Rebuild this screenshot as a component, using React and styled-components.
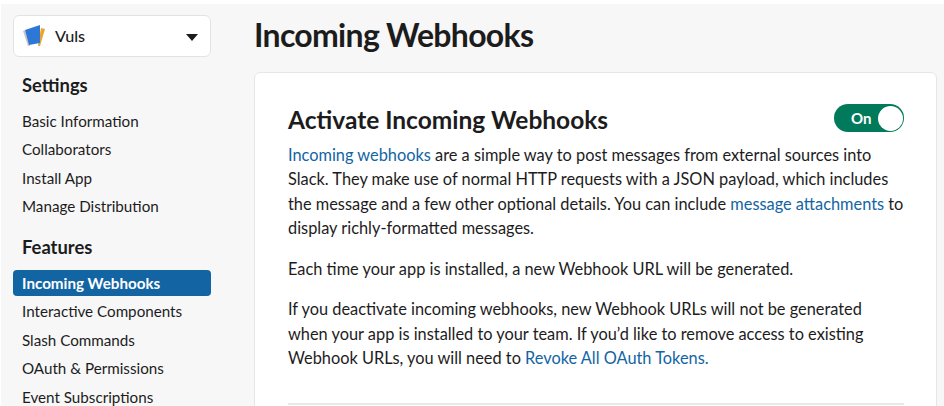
import React from 'react'
import styled, { createGlobalStyle } from "styled-components"

const GlobalStyle = createGlobalStyle`
  html, body {
    margin: 0;
    padding: 0;
    background: #fff;
  }
  body {
    font-family: Lato, "Liberation Sans", sans-serif;
    color: #1d1c1d;
  }
`;

const Page = styled.div`
  box-sizing: border-box;
  width: 944px;
  height: 406px;
  padding: 4px 0 0 1px;
  overflow: hidden;
`;

const Shell = styled.div`
  display: flex;
  height: 100%;
  background: #f7f7f7;
  overflow: hidden;
`;

const Sidebar = styled.nav`
  flex: none;
  width: 253px;
  box-sizing: border-box;
  padding: 11px 0 0 12px;
`;

const AppSelect = styled.div`
  box-sizing: border-box;
  display: flex;
  align-items: center;
  width: 198px;
  height: 42px;
  padding: 0 12px 0 8px;
  background: #fff;
  border: 1px solid #e3e3e3;
  border-radius: 6px;
  font-size: 16.2px;
  font-weight: 500;
`;

const AppName = styled.span`
  flex: 1;
  margin: -2px 0 0 9px;
`;

const Caret = styled.span`
  width: 0;
  height: 0;
  border-left: 6px solid transparent;
  border-right: 6px solid transparent;
  border-top: 7px solid #1d1c1d;
  margin-top: 2px;
`;

const GroupTitle = styled.h3`
  margin: ${(p) => p.$top}px 0 0 9px;
  font-size: 18.4px;
  line-height: 26px;
  font-weight: 700;
`;

const NavList = styled.div`
  display: flex;
  flex-direction: column;
  width: 198px;
  margin-top: ${(p) => p.$top}px;
`;

const NavItem = styled.div`
  box-sizing: border-box;
  height: ${(p) => (p.$active ? 26 : 28.5)}px;
  margin-bottom: ${(p) => (p.$active ? 1 : 0)}px;
  padding-left: 9px;
  border-radius: 4px;
  font-size: 15.2px;
  line-height: ${(p) => (p.$active ? 26 : 28.5)}px;
  font-weight: ${(p) => (p.$active ? 700 : 400)};
  color: ${(p) => (p.$active ? "#fff" : "#1d1c1d")};
  background: ${(p) => (p.$active ? "#1264a3" : "transparent")};
`;

const Main = styled.main`
  flex: 1;
  min-width: 0;
`;

const PageTitle = styled.h1`
  margin: 9px 0 0;
  font-size: 32px;
  line-height: 44px;
  font-weight: 700;
  letter-spacing: -0.7px;
`;

const Card = styled.section`
  box-sizing: border-box;
  width: 683px;
  height: 400px;
  margin-top: 15px;
  padding: 31px 32px 0 33px;
  background: #fff;
  border: 1px solid #e6e6e6;
  border-radius: 6px;
`;

const CardHeader = styled.div`
  display: flex;
  align-items: center;
  justify-content: space-between;
  height: 32px;
`;

const CardTitle = styled.h2`
  margin: 0;
  font-size: 24.5px;
  font-weight: 700;
  line-height: 32px;
`;

const Toggle = styled.div`
  box-sizing: border-box;
  display: flex;
  align-items: center;
  justify-content: space-between;
  width: 70px;
  height: 28px;
  margin-top: -4px;
  padding: 0 1px 0 17px;
  background: #007a5a;
  border-radius: 14px;
  color: #fff;
  font-size: 15px;
  font-weight: 700;
`;

const Knob = styled.span`
  width: 25px;
  height: 25px;
  border-radius: 50%;
  background: #fff;
`;

const Copy = styled.p`
  margin: ${(p) => p.$top}px 0 0;
  font-size: 16.35px;
  line-height: 24.5px;
  color: #1d1c1d;
`;

const Link = styled.a`
  color: #1264a3;
  text-decoration: none;
`;

const Rule = styled.hr`
  margin: 32px 0 0;
  border: 0;
  border-top: 2px solid #e8e8e8;
`;

function BookIcon() {
  return (
    <svg width="24" height="24" viewBox="0 0 24 24">
      <path d="M1 7 L6 22 L8 22 L3 6 Z" fill="#c4c8cc" />
      <path d="M19 4 L23 5 L18 22 L16 22 Z" fill="#eaa52b" />
      <path d="M3 6 L18 1 L18 19 L7 21 Z" fill="#2f77d6" />
    </svg>
  )
}

const settings = ["Basic Information", "Collaborators", "Install App", "Manage Distribution"]
const features = ["Incoming Webhooks", "Interactive Components", "Slash Commands", "OAuth & Permissions", "Event Subscriptions"]

function App() {
  return (
    <Page>
      <GlobalStyle />
      <Shell>
        <Sidebar>
          <AppSelect>
            <BookIcon />
            <AppName>Vuls</AppName>
            <Caret />
          </AppSelect>
          <GroupTitle $top={15}>Settings</GroupTitle>
          <NavList $top={8.5}>
            {settings.map((s) => <NavItem key={s}>{s}</NavItem>)}
          </NavList>
          <GroupTitle $top={13.5}>Features</GroupTitle>
          <NavList $top={10}>
            {features.map((s) => <NavItem key={s} $active={s === "Incoming Webhooks"}>{s}</NavItem>)}
          </NavList>
        </Sidebar>
        <Main>
          <PageTitle>Incoming Webhooks</PageTitle>
          <Card>
            <CardHeader>
              <CardTitle>Activate Incoming Webhooks</CardTitle>
              <Toggle>On<Knob /></Toggle>
            </CardHeader>
            <Copy $top={6.5}>
              <Link>Incoming webhooks</Link> are a simple way to post messages from external sources into Slack. They make use of normal HTTP requests with a JSON payload, which includes the message and a few other optional details. You can include <Link>message attachments</Link> to display richly-formatted messages.
            </Copy>
            <Copy $top={16}>Each time your app is installed, a new Webhook URL will be generated.</Copy>
            <Copy $top={16}>
              If you deactivate incoming webhooks, new Webhook URLs will not be generated when your app is installed to your team. If you’d like to remove access to existing Webhook URLs, you will need to <Link>Revoke All OAuth Tokens.</Link>
            </Copy>
            <Rule />
          </Card>
        </Main>
      </Shell>
    </Page>
  )
}

export default App
